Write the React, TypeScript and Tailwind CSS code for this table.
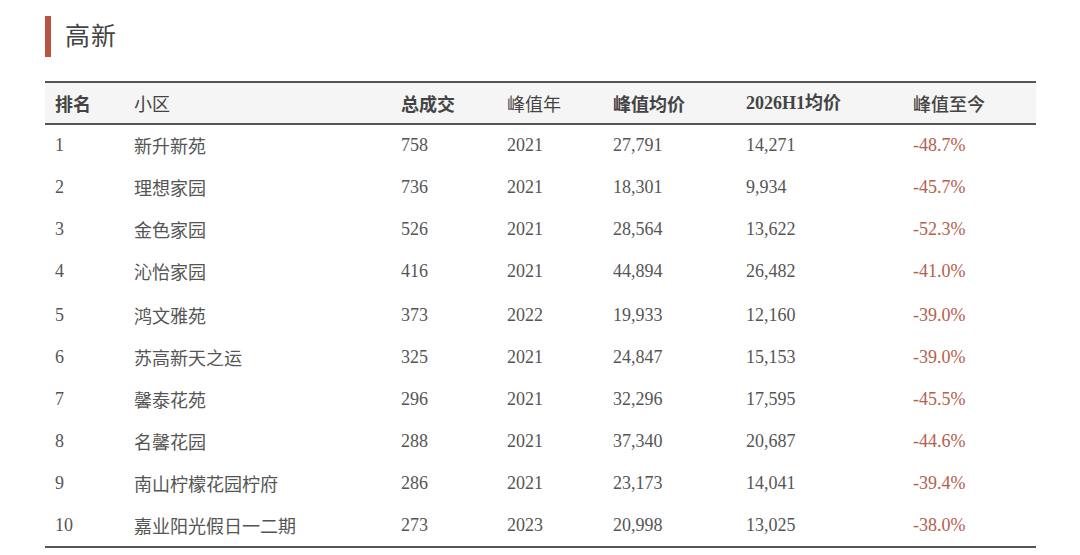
const rows = [
  { rank: 1, name: "新升新苑", total: 758, year: 2021, peak: "27,791", h1: "14,271", change: "-48.7%" },
  { rank: 2, name: "理想家园", total: 736, year: 2021, peak: "18,301", h1: "9,934", change: "-45.7%" },
  { rank: 3, name: "金色家园", total: 526, year: 2021, peak: "28,564", h1: "13,622", change: "-52.3%" },
  { rank: 4, name: "沁怡家园", total: 416, year: 2021, peak: "44,894", h1: "26,482", change: "-41.0%" },
  { rank: 5, name: "鸿文雅苑", total: 373, year: 2022, peak: "19,933", h1: "12,160", change: "-39.0%" },
  { rank: 6, name: "苏高新天之运", total: 325, year: 2021, peak: "24,847", h1: "15,153", change: "-39.0%" },
  { rank: 7, name: "馨泰花苑", total: 296, year: 2021, peak: "32,296", h1: "17,595", change: "-45.5%" },
  { rank: 8, name: "名馨花园", total: 288, year: 2021, peak: "37,340", h1: "20,687", change: "-44.6%" },
  { rank: 9, name: "南山柠檬花园柠府", total: 286, year: 2021, peak: "23,173", h1: "14,041", change: "-39.4%" },
  { rank: 10, name: "嘉业阳光假日一二期", total: 273, year: 2023, peak: "20,998", h1: "13,025", change: "-38.0%" },
]

const serif = "font-['Liberation_Serif','Noto_Sans_CJK_SC',serif]"
const sans = "font-['Noto_Sans_CJK_SC','Noto_Sans',sans-serif]"

export default function App() {
  return (
    <div className="w-[1080px] h-[555px] bg-white overflow-hidden">
      <div className="pl-[45px] pt-[16px] flex items-center">
        <div className="w-[6px] h-[41px] bg-[#b9533f]" />
        <h1 className={`${sans} ml-[14px] -mt-[4px] text-[25px] leading-none text-[#444] tracking-[1px]`}>高新</h1>
      </div>

      <table className="ml-[45px] mt-[24px] w-[991px] border-collapse table-fixed">
        <colgroup>
          <col className="w-[79px]" />
          <col className="w-[267px]" />
          <col className="w-[106px]" />
          <col className="w-[106px]" />
          <col className="w-[133px]" />
          <col className="w-[167px]" />
          <col className="w-[133px]" />
        </colgroup>
        <thead>
          <tr className="bg-[#f5f5f5] border-t-2 border-b-2 border-[#555] h-[42px] text-[18px] text-[#444] text-left">
            <th className={`${sans} pl-[10px] font-bold`}>排名</th>
            <th className={`${sans} pl-[10px] font-normal`}>小区</th>
            <th className={`${sans} pl-[10px] font-semibold`}>总成交</th>
            <th className={`${sans} pl-[10px] font-normal`}>峰值年</th>
            <th className={`${sans} pl-[10px] font-semibold`}>峰值均价</th>
            <th className={`${serif} pl-[10px] font-bold`}>2026H1均价</th>
            <th className={`${sans} pl-[10px] font-medium`}>峰值至今</th>
          </tr>
        </thead>
        <tbody className="text-[18px] text-[#555]">
          {rows.map((r) => {
            const cell = r.rank === 5 ? "pl-[10px] pt-[2px]" : "pl-[10px]"
            return (
              <tr key={r.rank} className={r.rank === 5 ? "h-[44px]" : "h-[42px]"}>
                <td className={`${serif} ${cell}`}>{r.rank}</td>
                <td className={`${sans} ${cell}`}>{r.name}</td>
                <td className={`${serif} ${cell}`}>{r.total}</td>
                <td className={`${serif} ${cell}`}>{r.year}</td>
                <td className={`${serif} ${cell}`}>{r.peak}</td>
                <td className={`${serif} ${cell}`}>{r.h1}</td>
                <td className={`${serif} ${cell} text-[#b5604c]`}>{r.change}</td>
              </tr>
            )
          })}
        </tbody>
      </table>
      <div className="ml-[45px] w-[991px] h-[2px] bg-[#555]" />
    </div>
  )
}
